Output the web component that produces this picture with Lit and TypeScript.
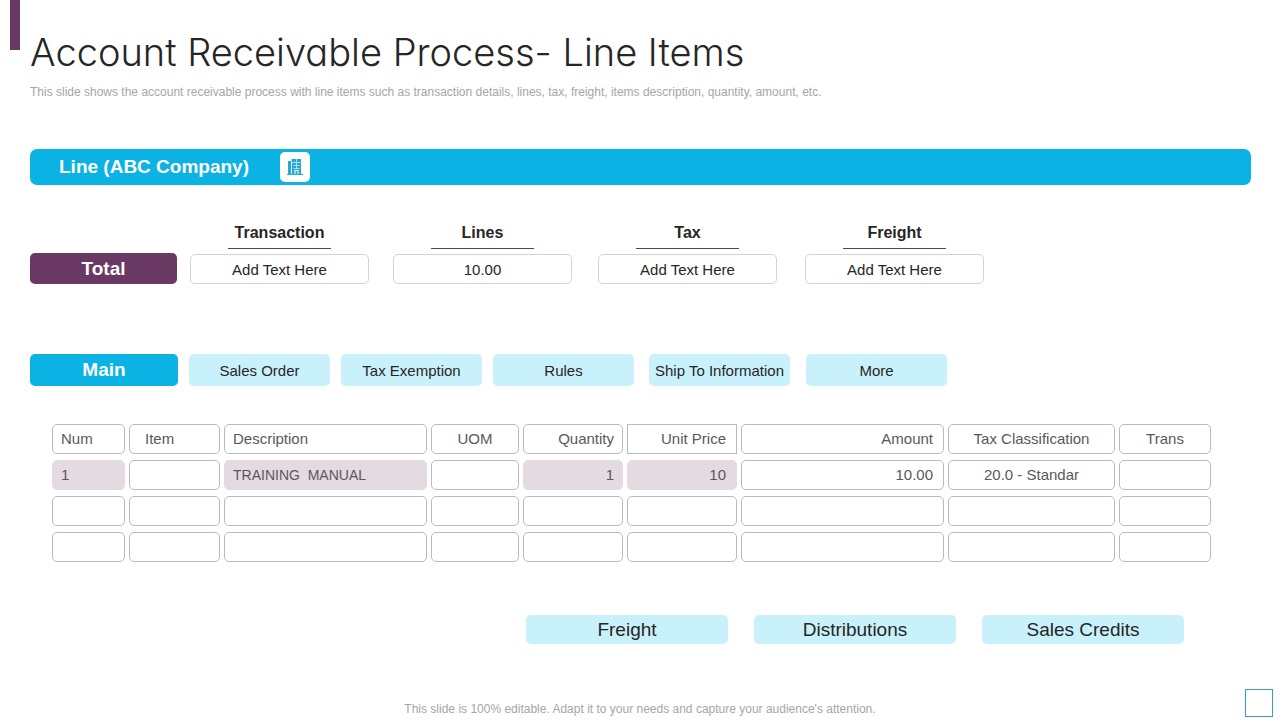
import { LitElement, html, css } from "lit";
import { customElement } from "lit/decorators.js";
import { classMap } from "lit/directives/class-map.js";

interface Column {
  label: string;
  align: string;
  square?: boolean;
}

interface Cell {
  text: string;
  filled?: boolean;
  compact?: boolean;
}

const TOTALS = [
  { id: "transaction", label: "Transaction", value: "Add Text Here" },
  { id: "lines", label: "Lines", value: "10.00" },
  { id: "tax", label: "Tax", value: "Add Text Here" },
  { id: "freight", label: "Freight", value: "Add Text Here" },
];

const TABS = ["Sales Order", "Tax Exemption", "Rules", "Ship To Information", "More"];

const COLUMNS: Column[] = [
  { label: "Num", align: "start" },
  { label: "Item", align: "indent" },
  { label: "Description", align: "start" },
  { label: "UOM", align: "center" },
  { label: "Quantity", align: "end" },
  { label: "Unit Price", align: "end-wide", square: true },
  { label: "Amount", align: "end-wide" },
  { label: "Tax Classification", align: "center" },
  { label: "Trans", align: "center" },
];

const EMPTY_ROW: Cell[] = COLUMNS.map(() => ({ text: "" }));

const ROWS: Cell[][] = [
  [
    { text: "1", filled: true },
    { text: "" },
    { text: "TRAINING  MANUAL", filled: true, compact: true },
    { text: "" },
    { text: "1", filled: true },
    { text: "10", filled: true },
    { text: "10.00" },
    { text: "20.0 - Standar" },
    { text: "" },
  ],
  EMPTY_ROW,
  EMPTY_ROW,
];

const ACTIONS = ["Freight", "Distributions", "Sales Credits"];

@customElement("app-root")
export class AppRoot extends LitElement {
  static styles = css`
    :host {
      display: block;
      font-family: "Liberation Sans", Arial, sans-serif;
      font-size: 15px;
      color: #262626;
      background: #fff;
    }
    * {
      box-sizing: border-box;
    }
    button,
    input {
      font: inherit;
      color: inherit;
      margin: 0;
      padding: 0;
      border: 0;
      border-radius: 5px;
      min-width: 0;
    }
    .page {
      min-height: 100vh;
      display: flex;
      flex-direction: column;
    }
    .header {
      display: flex;
      gap: 10px;
      padding: 0 30px 0 10px;
    }
    .accent {
      flex: none;
      width: 10px;
      height: 50px;
      background: #693863;
    }
    .heading {
      padding-top: 28px;
    }
    .title {
      margin: 0;
      font-family: Inter, Lato, sans-serif;
      font-feature-settings: "cv11";
      font-weight: 300;
      font-size: 38px;
      line-height: 48px;
    }
    .subtitle {
      margin: 8px 0 0;
      font-size: 12px;
      line-height: 16px;
      color: #a6a6a6;
    }
    .main {
      padding: 49px 29px 0 30px;
    }
    .banner {
      display: flex;
      align-items: center;
      gap: 31px;
      height: 36px;
      padding-left: 29px;
      border-radius: 7px;
      background: #0ab3e4;
      color: #fff;
    }
    .banner-title {
      margin: 0;
      font-size: 19px;
      line-height: 24px;
    }
    .badge {
      display: grid;
      place-items: center;
      width: 30px;
      height: 30px;
      border-radius: 5px;
      background: #fff;
    }
    .totals {
      display: flex;
      align-items: flex-end;
      gap: 13px;
      max-width: 954px;
      margin-top: 38px;
    }
    .tag {
      flex: none;
      width: 147px;
      height: 31px;
      border-radius: 5px;
      background: #693863;
      color: #fff;
      font-size: 19px;
      font-weight: bold;
      line-height: 31px;
      text-align: center;
    }
    .fields {
      flex: 1;
      display: grid;
      grid-template-columns: 203fr 205fr 207fr 179fr;
    }
    .field {
      display: flex;
      flex-direction: column;
      align-items: center;
      width: 179px;
      max-width: 100%;
    }
    .field-label {
      width: 103px;
      height: 26px;
      margin-bottom: 5px;
      border-bottom: 1px solid #693863;
      font-size: 16px;
      font-weight: bold;
      line-height: 20px;
      text-align: center;
    }
    .field-input {
      width: 100%;
      height: 30px;
      border: 1px solid #d4d4d4;
      background: #fff;
      text-align: center;
    }
    .tabs {
      display: grid;
      grid-template-columns: 159fr 152fr 152fr 156fr 157fr 141fr;
      max-width: 917px;
      margin-top: 70px;
    }
    .tab {
      width: 141px;
      max-width: 100%;
      height: 32px;
      background: #c9f1fb;
      white-space: nowrap;
    }
    .tab-active {
      width: 148px;
      background: #0ab3e4;
      color: #fff;
      font-size: 19px;
      font-weight: bold;
    }
    .items {
      display: flex;
      flex-direction: column;
      gap: 6px;
      margin: 38px 40px 0 22px;
      color: #595959;
    }
    .items-section {
      display: flex;
      flex-direction: column;
      gap: 6px;
    }
    .row {
      display: grid;
      grid-template-columns: 73fr 91fr 203fr 88fr 100fr 110fr 203fr 167fr 92fr;
      gap: 4px;
    }
    .cell {
      height: 30px;
      padding: 0 8px;
      border: 1px solid #bababa;
      border-radius: 5px;
      font-weight: normal;
      line-height: 28px;
      white-space: pre;
    }
    .filled {
      border-color: #e4dae1;
      background: #e4dae1;
    }
    .compact {
      font-size: 14px;
    }
    .square {
      border-radius: 0;
    }
    .start {
      text-align: left;
    }
    .indent {
      padding-left: 15px;
      text-align: left;
    }
    .center {
      text-align: center;
    }
    .end {
      text-align: right;
    }
    .end-wide {
      padding-right: 10px;
      text-align: right;
    }
    .actions {
      display: flex;
      justify-content: flex-end;
      gap: 26px;
      margin: 53px 67px 0 0;
    }
    .action {
      width: 202px;
      height: 29px;
      background: #c9f1fb;
      font-size: 19px;
    }
    .footer {
      display: grid;
      grid-template-columns: 1fr auto 1fr;
      align-items: end;
      margin-top: auto;
      padding: 0 7px 3px;
    }
    .note {
      grid-column: 2;
      margin: 0;
      font-size: 12px;
      line-height: 16px;
      color: #a6a6a6;
    }
    .page-box {
      justify-self: end;
      width: 28px;
      height: 28px;
      border: 1px solid #3ba0a6;
    }
  `;

  private renderIcon() {
    return html`<svg width="16" height="18" viewBox="0 0 16 18" aria-hidden="true">
      <path fill="#2aa9cf" d="M1 3h3v13H1zM4.500 1h9.500v15H4.500zM0 16h16v1H0z" />
      <path
        stroke="#fff"
        fill="none"
        opacity=".6"
        d="M4.500 3v13M9.500 1v3M5 4.500h8.500M6.500 7.500h6M6.500 10.500h6M9.500 5v6"
      />
      <path fill="#fff" d="M7.500 12h4v4h-4z" />
      <path fill="#2aa9cf" d="M8.500 13h2v3h-2z" />
    </svg>`;
  }

  render() {
    return html`
      <div class="page">
        <header class="header">
          <div class="accent"></div>
          <div class="heading">
            <h1 class="title">Account Receivable Process- Line Items</h1>
            <p class="subtitle">
              This slide shows the account receivable process with line items such as transaction details, lines, tax,
              freight, items description, quantity, amount, etc.
            </p>
          </div>
        </header>

        <main class="main">
          <div class="banner">
            <h2 class="banner-title">Line (ABC Company)</h2>
            <span class="badge">${this.renderIcon()}</span>
          </div>

          <section class="totals">
            <div class="tag">Total</div>
            <div class="fields">
              ${TOTALS.map(
                (field) => html`
                  <div class="field">
                    <label class="field-label" for=${field.id}>${field.label}</label>
                    <input class="field-input" id=${field.id} type="text" .value=${field.value} />
                  </div>
                `
              )}
            </div>
          </section>

          <nav class="tabs">
            <button class="tab tab-active" type="button">Main</button>
            ${TABS.map((tab) => html`<button class="tab" type="button">${tab}</button>`)}
          </nav>

          <table class="items">
            <thead class="items-section">
              <tr class="row">
                ${COLUMNS.map(
                  (column) =>
                    html`<th
                      scope="col"
                      class=${classMap({ cell: true, [column.align]: true, square: !!column.square })}
                    >${column.label}</th>`
                )}
              </tr>
            </thead>
            <tbody class="items-section">
              ${ROWS.map(
                (row) => html`<tr class="row">
                  ${row.map(
                    (cell, i) =>
                      html`<td
                        class=${classMap({
                          cell: true,
                          [COLUMNS[i].align]: true,
                          filled: !!cell.filled,
                          compact: !!cell.compact,
                        })}
                      >${cell.text}</td>`
                  )}
                </tr>`
              )}
            </tbody>
          </table>

          <div class="actions">
            ${ACTIONS.map((action) => html`<button class="action" type="button">${action}</button>`)}
          </div>
        </main>

        <footer class="footer">
          <p class="note">This slide is 100% editable. Adapt it to your needs and capture your audience's attention.</p>
          <div class="page-box"></div>
        </footer>
      </div>
    `;
  }
}
